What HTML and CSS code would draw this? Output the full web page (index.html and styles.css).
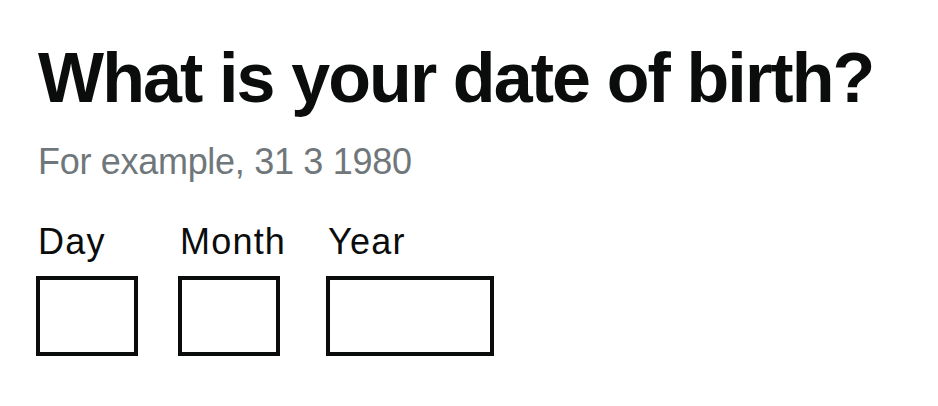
FILE: index.html
```html
<!DOCTYPE html>
<html lang="en">
<head>
    <meta charset="UTF-8">
    <meta name="viewport" content="width=device-width, initial-scale=1.0">
    <title>Date of birth</title>
    <link rel="stylesheet" href="styles.css">
</head>
<body>
    <div class="form-group">
        <fieldset class="fieldset">
            <legend class="legend">
                <h1 class="heading">What is your date of birth?</h1>
            </legend>
            <div class="hint">For example, 31 3 1980</div>
            <div class="date-input">
                <div class="date-item">
                    <label class="label" for="dob-day">Day</label>
                    <input class="input input-2" id="dob-day" type="text" inputmode="numeric">
                </div>
                <div class="date-item">
                    <label class="label" for="dob-month">Month</label>
                    <input class="input input-2" id="dob-month" type="text" inputmode="numeric">
                </div>
                <div class="date-item">
                    <label class="label" for="dob-year">Year</label>
                    <input class="input input-4" id="dob-year" type="text" inputmode="numeric">
                </div>
            </div>
        </fieldset>
    </div>
</body>
</html>
```
FILE: styles.css
```css
body {
    margin: 0;
    padding: 38px 36px 0;
    background: #fff;
    color: #0b0c0c;
    font-family: "Liberation Sans", Arial, sans-serif;
}
.fieldset {
    margin: 0;
    padding: 0;
    border: 0;
    min-width: 0;
}
.legend {
    padding: 0;
}
.heading {
    margin: 0 0 24px;
    font-size: 70px;
    line-height: 80px;
    font-weight: 700;
    letter-spacing: -1.9px;
    padding-left: 2px;
}
.hint {
    color: #6f777b;
    font-size: 36px;
    line-height: 40px;
    letter-spacing: -0.3px;
    padding-left: 2px;
    margin-bottom: 40px;
}
.date-input {
    display: flex;
}
.date-item {
    display: flex;
    flex-direction: column;
    align-items: flex-start;
    margin-right: 40px;
}
.label {
    display: block;
    font-size: 36px;
    line-height: 40px;
    letter-spacing: 1.2px;
    padding-left: 2px;
    margin-bottom: 14px;
}
.input {
    box-sizing: border-box;
    height: 80px;
    margin: 0;
    padding: 8px;
    border: 4px solid #0b0c0c;
    border-radius: 0;
    font: inherit;
    font-size: 36px;
}
.input-2 {
    width: 102px;
}
.input-4 {
    width: 168px;
}
```
